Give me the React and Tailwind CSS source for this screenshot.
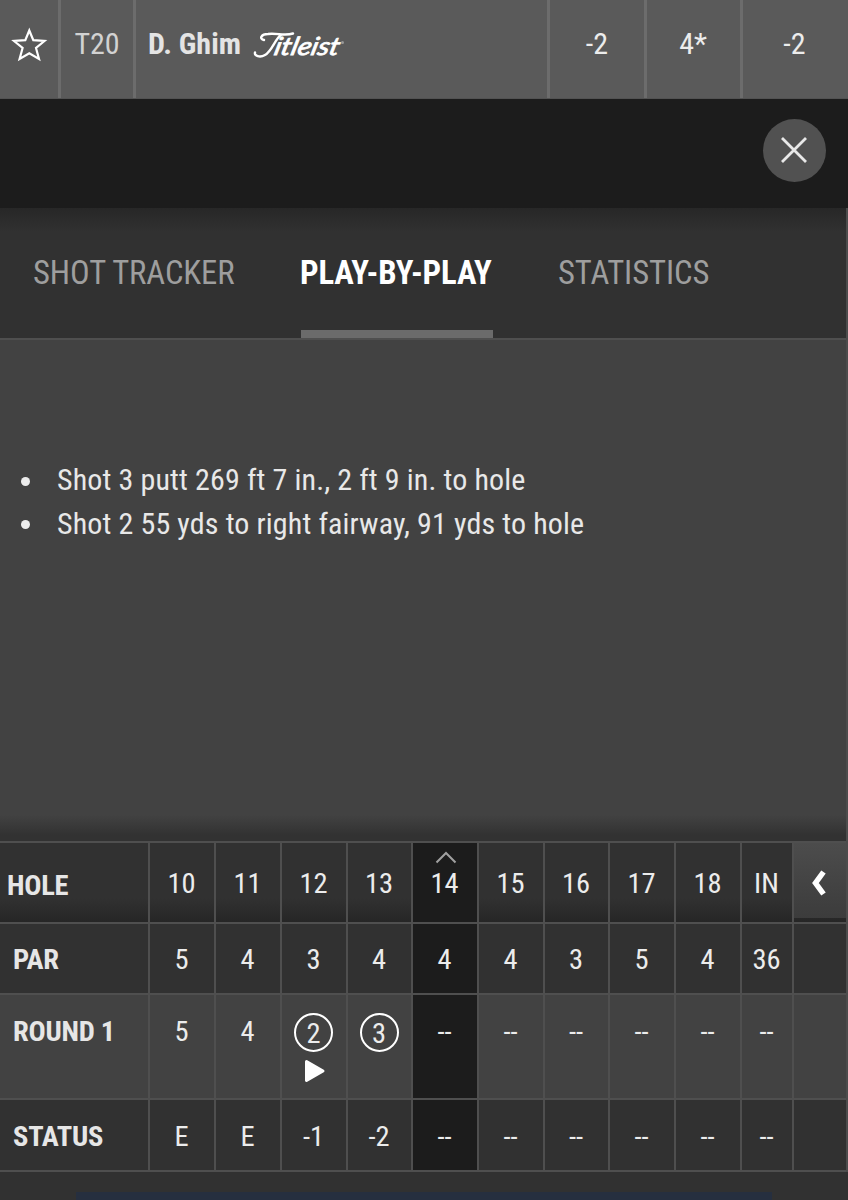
import React from "react";

const holes = ["10", "11", "12", "13", "14", "15", "16", "17", "18", "IN"];
const par = ["5", "4", "3", "4", "4", "4", "3", "5", "4", "36"];
const round = ["5", "4", "2", "3", "--", "--", "--", "--", "--", "--"];
const status = ["E", "E", "-1", "-2", "--", "--", "--", "--", "--", "--"];

const ACTIVE = 4;

const plays = [
  "Shot 3 putt 269 ft 7 in., 2 ft 9 in. to hole",
  "Shot 2 55 yds to right fairway, 91 yds to hole",
];

function Titleist() {
  return (
    <svg width="92" height="36" viewBox="0 0 92 36" className="ml-[12px] mt-[-1px]">
      <path
        d="M11 14 C6 13 8 8 15 8 C24 7 32 10 40 7.500 M28 9 C22 13 19 25 12 29 C7 32 1 30 2 26.500"
        fill="none"
        stroke="#fff"
        strokeWidth="2.4"
        strokeLinecap="round"
      />
      <g transform="translate(20 29) skewX(-14)">
        <text
          x="0"
          y="0"
          textLength="65"
          lengthAdjust="spacingAndGlyphs"
          fill="#fff"
          className="font-['Lato',sans-serif] text-[25px] font-normal italic"
          stroke="#fff"
          strokeWidth="0.8"
        >
          itleist
        </text>
      </g>
      <circle cx="89.500" cy="16.500" r="1.500" fill="#999" />
    </svg>
  );
}

function Row({ label, cells, height, labelClass, className, last, render }) {
  return (
    <div
      className={`grid grid-cols-[148px_66px_66px_66px_65px_66px_66px_65px_66px_66px_52px_54px] border-t-2 border-[#4f4f4f] ${height} ${className}`}
    >
      <div className={`font-bold text-[#e6e6e6] tracking-[-0.25px] ${labelClass}`}>{label}</div>
      {cells.map((c, i) => (
        <div
          key={i}
          className={`relative flex justify-center border-l-2 border-[#4f4f4f] pr-[1px] ${
            i === ACTIVE ? "bg-[#1c1c1c]" : ""
          }`}
        >
          {render ? render(c, i) : c}
        </div>
      ))}
      <div className="border-l-2 border-[#4f4f4f]">{last}</div>
    </div>
  );
}

export default function App() {
  return (
    <div className="flex h-[1200px] w-[848px] flex-col overflow-hidden bg-[#313131] font-['Roboto_Condensed','Roboto',sans-serif] text-[28.500px] leading-[34px] text-[#ececec] [font-stretch:75%]">
      <div className="grid h-[99px] shrink-0 grid-cols-[58px_75px_414px_97px_96px_108px] border-b border-[#525252] bg-[#5a5a5a] text-[30px]">
        <div className="pt-[27px] pl-[11px]">
          <svg width="37" height="36" viewBox="0 0 37 36">
            <path
              d="M18.300 3.500 L22.300 13.200 L33.500 14 L25 21 L28 32 L18.300 26.300 L8.600 32 L11.600 21 L3 14 L14.300 13.200 Z"
              fill="none"
              stroke="#fff"
              strokeWidth="2.200"
            />
          </svg>
        </div>
        <div className="border-l-[3px] border-[#6c6c6c] pt-[27px] text-center text-[#d2d2d2]">T20</div>
        <div className="flex border-l-[3px] border-[#6c6c6c] pt-[27px] pl-[12px]">
          <span className="font-bold text-[#e4e4e4]">D. Ghim</span>
          <Titleist />
        </div>
        <div className="border-l-[3px] border-[#6c6c6c] pt-[27px] text-center">-2</div>
        <div className="border-l-[3px] border-[#6c6c6c] pt-[27px] pr-[1px] text-center">4*</div>
        <div className="border-l-[3px] border-[#6c6c6c] pt-[27px] pr-[2px] text-center">-2</div>
      </div>

      <div className="flex h-[109px] shrink-0 justify-end bg-[#1c1c1c] pt-[20px] pr-[22px]">
        <button className="flex h-[63px] w-[63px] items-center justify-center rounded-full bg-[#515151] pr-[1px] pb-[1px]">
          <svg width="28" height="28" viewBox="0 0 28 28">
            <path d="M2 2 L26 26 M26 2 L2 26" stroke="#e8e8e8" strokeWidth="2.800" />
          </svg>
        </button>
      </div>

      <div className="flex h-[964px] shrink-0 flex-col border-r-2 border-[#4c4c4c]">
        <div className="flex h-[132px] shrink-0 border-b-2 border-[#4f4f4f] bg-gradient-to-b from-[#272727] to-[#313131] to-[24px] pl-[33px] text-[32.700px] tracking-[-0.100px] text-[#9e9e9e]">
          <div className="w-[268px] pt-[48px]">SHOT TRACKER</div>
          <div className="w-[192px] border-b-[8px] border-[#6b6b6b] pt-[48px] font-bold whitespace-nowrap text-white">
            <span className="-ml-px">PLAY-BY-PLAY</span>
          </div>
          <div className="pt-[48px] pl-[65px]">STATISTICS</div>
        </div>

        <div className="flex-1 bg-gradient-to-b from-[#424242] from-[475px] to-[#323232] to-[495px] pt-[118px]">
          <ul className="text-[30px] leading-[43.500px] tracking-[0.130px] text-[#e8e8e8]">
            {plays.map((p) => (
              <li key={p} className="flex items-center whitespace-nowrap">
                <span className="mt-[3px] mr-[27px] ml-[21px] h-[9px] w-[9px] rounded-full bg-[#ececec]" />
                {p}
              </li>
            ))}
          </ul>
        </div>

        <div className="h-[331px] shrink-0 overflow-hidden border-b-2 border-[#4f4f4f]">
          <Row
            label="HOLE"
            cells={holes}
            height="h-[81px]"
            labelClass="pl-[7px] pt-[26px]"
            className="bg-gradient-to-b from-[#313131] from-70% to-[#262626]"
            render={(c, i) => (
              <div className="pt-[24px]">
                {i === ACTIVE && (
                  <svg width="22" height="13" viewBox="0 0 22 13" className="absolute top-[8px] left-[22px]">
                    <path d="M1.500 11.500 L11 2 L20.500 11.500" fill="none" stroke="#a0a0a0" strokeWidth="2" />
                  </svg>
                )}
                {c}
              </div>
            )}
            last={
              <div className="h-[75px] bg-gradient-to-b from-[#4c4c4c] to-[#3c3c3c] pt-[26px] pl-[17px]">
                <svg width="16" height="28" viewBox="0 0 16 28">
                  <path d="M12.500 3 L4.500 14 L12.500 25" fill="none" stroke="#fff" strokeWidth="5.500" />
                </svg>
              </div>
            }
          />
          <Row
            label="PAR"
            cells={par}
            height="h-[71px]"
            labelClass="pl-[13px] pt-[19px]"
            className="bg-[#313131]"
            render={(c) => <div className="pt-[19px]">{c}</div>}
          />
          <Row
            label="ROUND 1"
            cells={round}
            height="h-[105px]"
            labelClass="pl-[13px] pt-[20px]"
            className="bg-[#424242]"
            render={(c, i) =>
              i === 2 || i === 3 ? (
                <div className="flex flex-col items-center pt-[18px]">
                  <div className="flex h-[39px] w-[39px] items-center justify-center rounded-full border-2 border-white pt-[3px]">
                    {c}
                  </div>
                  {i === 2 && (
                    <svg width="22" height="24" viewBox="0 0 22 24" className="mt-[7px] ml-[2px]">
                      <path
                        d="M2.500 2.500 L19 12 L2.500 21.500 Z"
                        fill="#fff"
                        stroke="#fff"
                        strokeWidth="3"
                        strokeLinejoin="round"
                      />
                    </svg>
                  )}
                </div>
              ) : (
                <div className="pt-[20px]">{c}</div>
              )
            }
          />
          <Row
            label="STATUS"
            cells={status}
            height="h-[72px]"
            labelClass="pl-[13px] pt-[20px]"
            className="bg-[#313131]"
            render={(c) => <div className="pt-[20px]">{c}</div>}
          />
        </div>
      </div>

      <div className="mt-[20px] ml-[76px] h-[8px] w-[696px] shrink-0 bg-[#262f3f]" />
    </div>
  );
}
